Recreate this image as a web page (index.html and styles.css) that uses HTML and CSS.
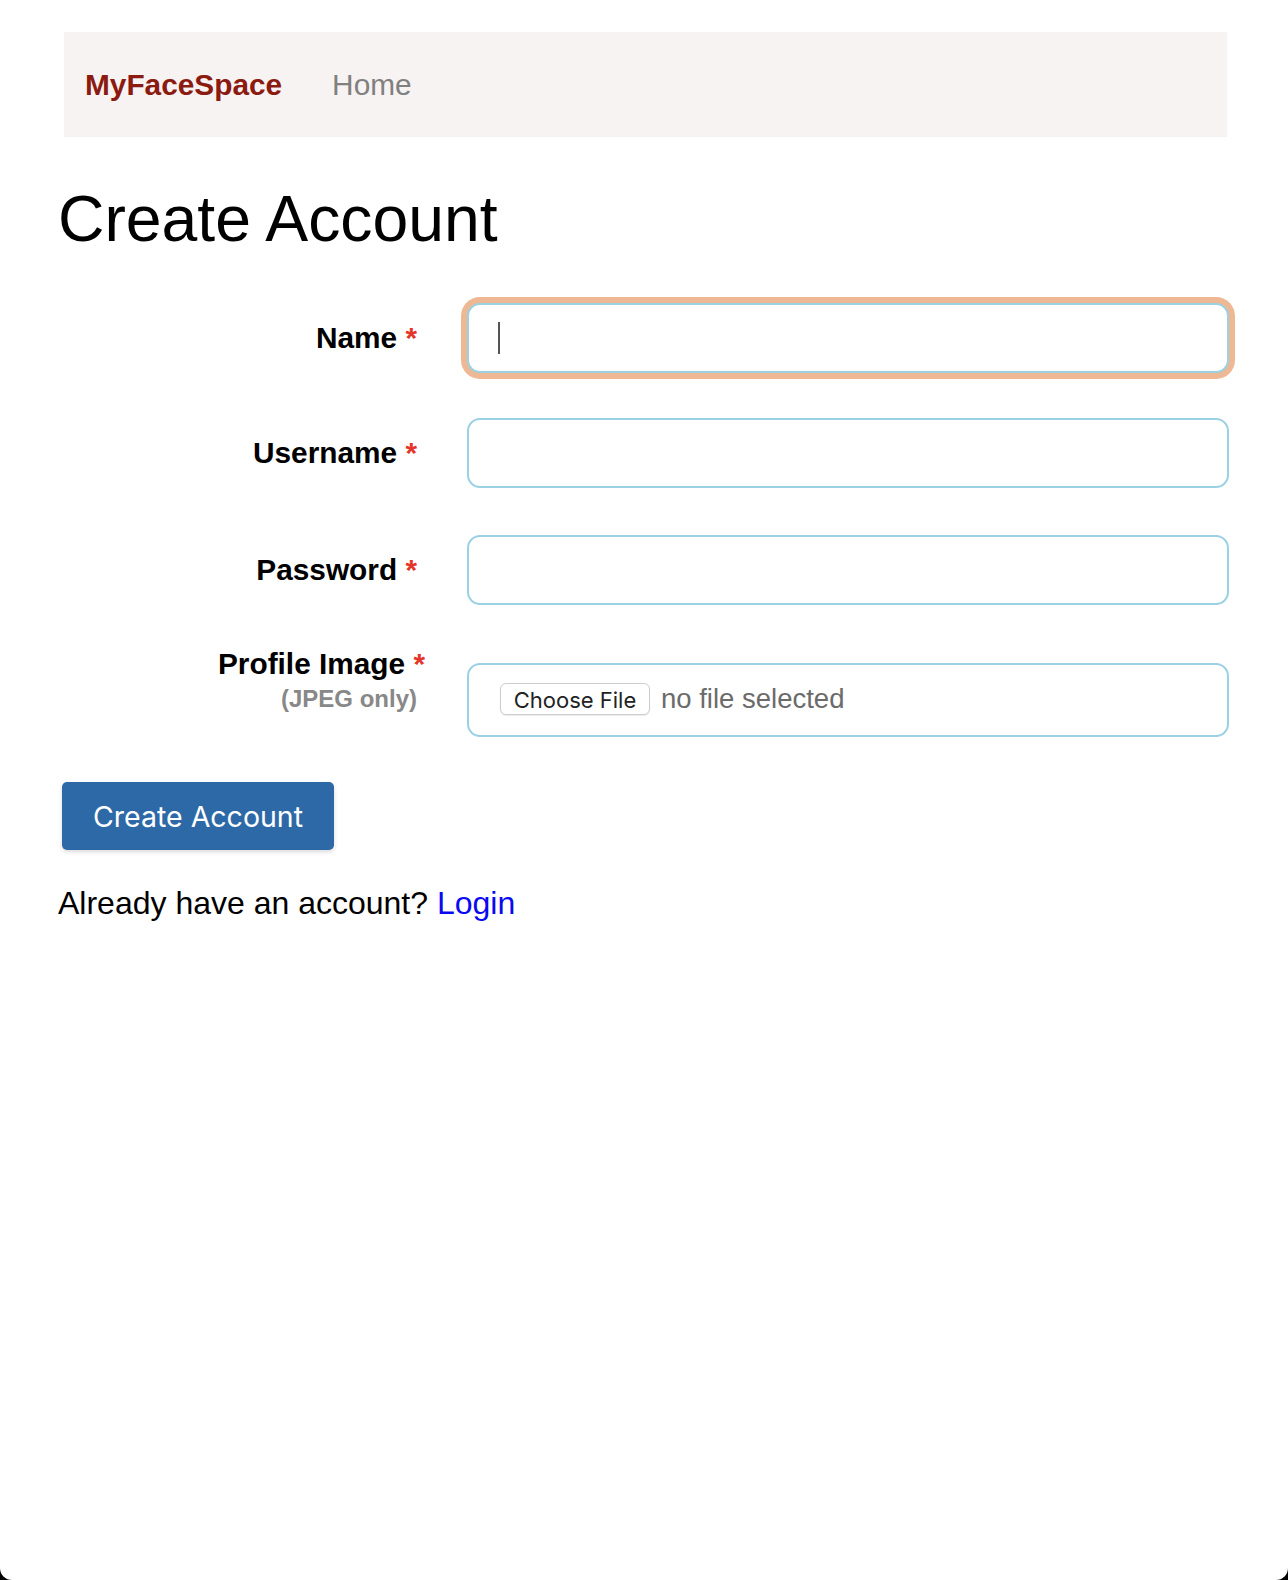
FILE: index.html
```html
<!DOCTYPE html>
<html lang="en">
<head>
<meta charset="utf-8">
<title>Create Account - MyFaceSpace</title>
<link rel="stylesheet" href="styles.css">
</head>
<body>
<div class="page">
  <nav class="navbar">
    <a class="brand" href="#">MyFaceSpace</a>
    <a class="nav-link" href="#">Home</a>
  </nav>

  <h1 class="title">Create Account</h1>

  <form class="form">
    <div class="row row-name">
      <label class="label" for="name">Name <span class="req">*</span></label>
      <div class="field">
        <input class="input input-focus" id="name" type="text">
        <span class="caret"></span>
      </div>
    </div>
    <div class="row row-username">
      <label class="label" for="username">Username <span class="req">*</span></label>
      <div class="field">
        <input class="input" id="username" type="text">
      </div>
    </div>
    <div class="row row-password">
      <label class="label" for="password">Password <span class="req">*</span></label>
      <div class="field">
        <input class="input" id="password" type="password">
      </div>
    </div>
    <div class="row row-file">
      <label class="label label-multi" for="image">
        <span class="line1">Profile Image <span class="req">*</span></span>
        <span class="hint">(JPEG only)</span>
      </label>
      <div class="field">
        <div class="file-input" id="image">
          <span class="file-btn">Choose File</span>
          <span class="file-text">no file selected</span>
        </div>
      </div>
    </div>

    <button class="submit" type="button">Create Account</button>
  </form>

  <p class="already">Already have an account? <a class="login" href="#">Login</a></p>
</div>
</body>
</html>
```

FILE: styles.css
```css
html {
  background: #000;
}

body {
  margin: 0;
  min-height: 100vh;
  background: #fff;
  border-radius: 0 0 12px 12px;
  font-family: "Liberation Sans", Arial, Helvetica, sans-serif;
  color: #000;
}

.page {
  padding: 32px 59px 0 58px;
}

.navbar {
  display: flex;
  align-items: center;
  height: 105px;
  margin: 0 2px 0 6px;
  padding-left: 21px;
  background: #f7f3f2;
  gap: 50px;
}

.brand {
  font-size: 29.8px;
  font-weight: bold;
  color: #8b1a10;
  text-decoration: none;
}

.nav-link {
  font-size: 29.8px;
  color: #808080;
  text-decoration: none;
}

.title {
  margin: 46px 0 48px;
  font-size: 64.3px;
  line-height: 72px;
  font-weight: normal;
}

.form {
  margin: 0;
}

.row {
  display: grid;
  grid-template-columns: 367px 1fr;
  column-gap: 42px;
  align-items: center;
}

.row-name { margin-bottom: 45px; }
.row-username { margin-bottom: 47px; }
.row-password { margin-bottom: 58px; }

.label {
  font-size: 29.8px;
  line-height: 34px;
  font-weight: bold;
  text-align: right;
  padding-right: 8px;
}

.req {
  color: #e5352a;
}

.label-multi {
  align-self: start;
  margin-top: -16px;
}

.line1 {
  display: block;
  margin-right: -8px;
}

.hint {
  display: block;
  font-size: 24px;
  line-height: 36px;
  color: #888;
}

.field {
  position: relative;
}

.input {
  display: block;
  box-sizing: border-box;
  width: 100%;
  height: 70px;
  margin: 0;
  padding: 0 30px;
  border: 2px solid #9ad2e3;
  border-radius: 13px;
  background: #fff;
  font-family: "Liberation Sans", Arial, sans-serif;
  font-size: 28px;
  outline: none;
}

.input-focus {
  box-shadow: 0 0 0 6px #edb893;
}

.caret {
  position: absolute;
  left: 31px;
  top: 19px;
  width: 2px;
  height: 32px;
  background: #555;
}

.file-input {
  box-sizing: border-box;
  display: flex;
  align-items: center;
  height: 74px;
  padding-left: 31px;
  border: 2px solid #9ad2e3;
  border-radius: 13px;
}

.file-btn {
  box-sizing: border-box;
  display: flex;
  align-items: center;
  justify-content: center;
  width: 150px;
  height: 32px;
  margin-top: -3px;
  padding-top: 2px;
  border: 1px solid #cdcdcd;
  border-radius: 6px;
  background: #fff;
  box-shadow: 0 1px 1px rgba(0, 0, 0, 0.08);
  font-family: Inter, "Noto Sans", sans-serif;
  font-size: 22px;
  color: #222;
}

.file-text {
  margin-left: 11px;
  margin-top: -2px;
  font-size: 27.5px;
  color: #6b6b6b;
}

.submit {
  display: block;
  width: 272px;
  height: 68px;
  margin: 45px 0 0 4px;
  padding: 0;
  border: none;
  border-radius: 5px;
  background: #2d69a6;
  box-shadow: 0 2px 4px rgba(0, 0, 0, 0.15);
  color: #fff;
  font-family: Inter, "Noto Sans", sans-serif;
  font-size: 28.5px;
  cursor: pointer;
}

.already {
  margin: 35px 0 0;
  font-size: 32px;
  line-height: 36px;
}

.login {
  color: #0a0af0;
  text-decoration: none;
}
```
